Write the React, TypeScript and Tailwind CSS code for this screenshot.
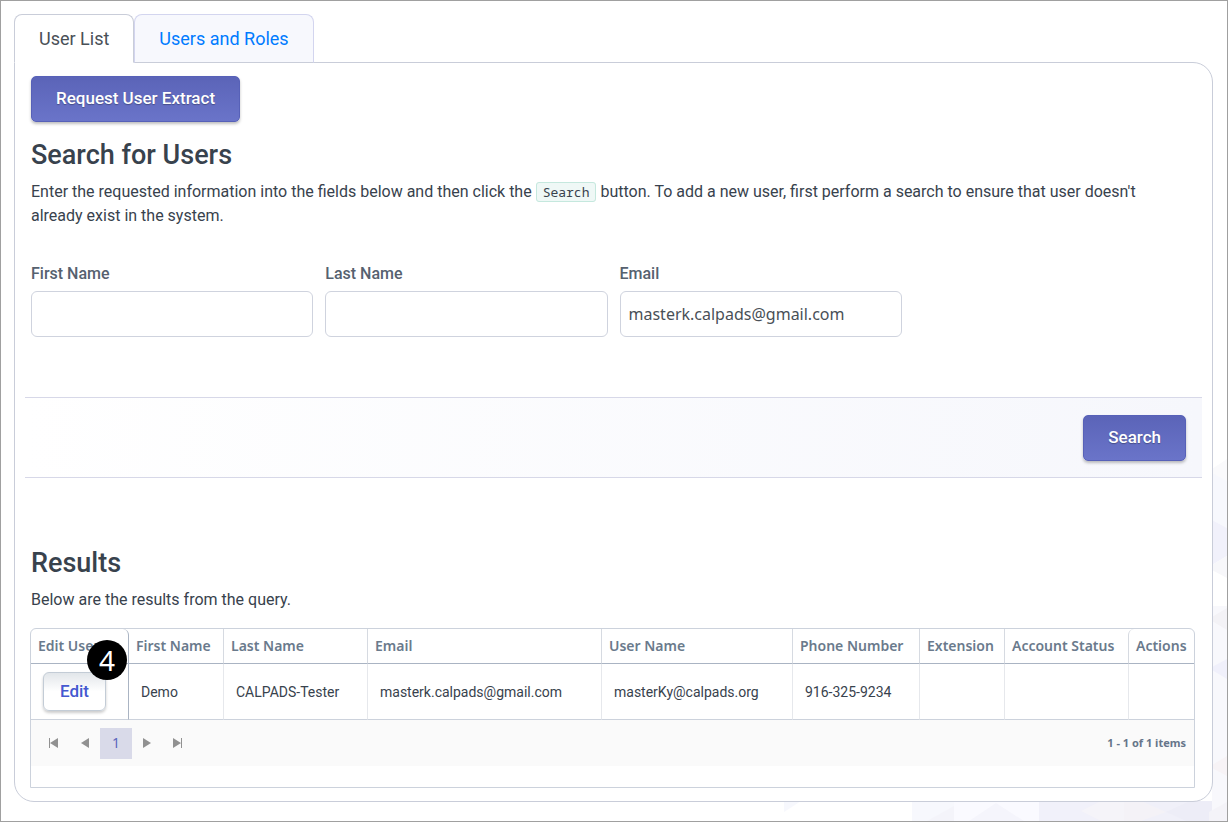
import { useState } from "react";
import { clsx } from "clsx";

const fields = [
  { id: "firstName", label: "First Name", value: "" },
  { id: "lastName", label: "Last Name", value: "" },
  { id: "email", label: "Email", value: "masterk.calpads@gmail.com" },
];

const columns = [
  { title: "Edit User", width: "w-[98px]" },
  { title: "First Name", width: "w-[94px]" },
  { title: "Last Name", width: "w-[144px]" },
  { title: "Email", width: "w-[234px]" },
  { title: "User Name", width: "w-[191px]" },
  { title: "Phone Number", width: "w-[127px]" },
  { title: "Extension", width: "w-[85px]" },
  { title: "Account Status", width: "w-[124px]" },
  { title: "Actions", width: "w-[66px]" },
];

const rows = [
  [
    "Demo",
    "CALPADS-Tester",
    "masterk.calpads@gmail.com",
    "masterKy@calpads.org",
    "916-325-9234",
    "",
    "",
    "",
  ],
];

const App = () => {
  const [tab, setTab] = useState("list");

  return (
    <div className="relative isolate min-h-screen border border-[#a0a0a0] bg-white pt-[13px] pr-[14px] pb-[19px] pl-[13px] font-['Roboto',sans-serif] text-[#38424d]">
      <Backdrop />

      <div role="tablist" className="relative -mb-px flex">
        <Tab active={tab === "list"} onClick={() => setTab("list")}>
          User List
        </Tab>
        <Tab active={tab === "roles"} onClick={() => setTab("roles")}>
          Users and Roles
        </Tab>
      </div>

      <main className="rounded-[20px] rounded-tl-none border border-[#c9cdd9] bg-white px-4 pt-[13px] pb-[13px]">
        <PrimaryButton>Request User Extract</PrimaryButton>

        <h2 className="mt-4 text-[27px] leading-[34px] font-medium">
          Search for Users
        </h2>
        <p className="mt-2 pr-8 leading-6">
          Enter the requested information into the fields below and then click
          the{" "}
          <code className="rounded-[3px] border border-[#c5e8de] bg-[#eff8f6] px-1.5 font-['Noto_Sans_Mono','DejaVu_Sans_Mono',monospace] text-[13px]">
            Search
          </code>{" "}
          button. To add a new user, first perform a search to ensure that user
          doesn't already exist in the system.
        </p>

        <form onSubmit={(e) => e.preventDefault()}>
          <div className="mt-[33px] grid grid-cols-4 gap-3">
            {fields.map((field) => (
              <div key={field.id}>
                <label
                  htmlFor={field.id}
                  className="block leading-[26px] font-medium text-[#56616f]"
                >
                  {field.label}
                </label>
                <input
                  id={field.id}
                  type="text"
                  defaultValue={field.value}
                  className="mt-1 h-[46px] w-full rounded-md border border-[#cfd3de] bg-white px-2 font-['Noto_Sans',sans-serif] text-base text-[#495057] outline-none focus:border-[#5c66bd]"
                />
              </div>
            ))}
          </div>

          <div className="-mx-1.5 mt-[60px] flex h-[81px] items-center justify-end border-y border-[#d7d8e8] bg-linear-to-r from-white to-[#f6f7fc] px-4">
            <PrimaryButton type="submit">Search</PrimaryButton>
          </div>
        </form>

        <h2 className="mt-[68px] text-[27px] leading-[34px] font-medium">
          Results
        </h2>
        <p className="mt-2 leading-6">Below are the results from the query.</p>

        <div className="mr-px -ml-px mt-4 rounded-t-md border border-[#ccd2dc] pb-[21px]">
          <table className="w-full table-fixed border-separate border-spacing-0 text-left text-sm">
            <thead>
              <tr className="h-[35px]">
                {columns.map((column, i) => (
                  <th
                    key={column.title}
                    scope="col"
                    className={clsx(
                      "border-b border-b-[#aab4c3] px-[7px] font-['Noto_Sans',sans-serif] font-semibold whitespace-nowrap text-[#6a7a8c]",
                      column.width,
                      i === 0 && "relative rounded-tr-md border-r border-r-[#aab4c3]",
                      i > 1 && "border-l border-l-[#d6dae1]",
                      i === columns.length - 1 && "rounded-t-md"
                    )}
                  >
                    {column.title}
                    {i === 0 && <StepMarker step={4} />}
                  </th>
                ))}
              </tr>
            </thead>
            <tbody>
              {rows.map((row) => (
                <tr key={row[2]} className="h-14">
                  <td className="border-r border-b border-[#ccd2dc] border-r-[#aab4c3] pl-3">
                    <button className="h-[39px] rounded-md border border-[#c3ccd6] bg-linear-to-b from-[#e2e6ea] via-white via-50% to-white px-4 text-[17px] font-medium text-[#4458d0] shadow-[0_2px_3px_rgba(0,0,0,0.2)]">
                      Edit
                    </button>
                  </td>
                  {row.map((value, i) => (
                    <td
                      key={i}
                      className={clsx(
                        "border-b border-b-[#ccd2dc] px-3",
                        i > 0 && "border-l border-l-[#e6e8ec]"
                      )}
                    >
                      {value}
                    </td>
                  ))}
                </tr>
              ))}
            </tbody>
          </table>
          <Pager />
        </div>
      </main>
    </div>
  );
};

const Tab = ({
  active,
  onClick,
  children,
}: {
  active: boolean;
  onClick: () => void;
  children: React.ReactNode;
}) => {
  return (
    <button
      role="tab"
      aria-selected={active}
      onClick={onClick}
      className={clsx(
        "h-[49px] rounded-t-lg border px-6 text-lg",
        active
          ? "border-[#c9cdd9] border-b-white bg-white text-[#495057]"
          : "border-[#d3d5ef] border-b-[#c9cdd9] bg-[#f7f8fd] text-[#007bff]"
      )}
    >
      {children}
    </button>
  );
};

const PrimaryButton = ({
  type = "button",
  children,
}: {
  type?: "button" | "submit";
  children: React.ReactNode;
}) => {
  return (
    <button
      type={type}
      className="block h-[46px] rounded-[5px] border border-[#5761b8] bg-linear-to-b from-[#5b64b8] to-[#6a74c9] px-6 text-[17px] font-medium text-white shadow-[0_2px_3px_rgba(0,0,0,0.25)] text-shadow-[0_1px_1px_rgba(0,0,0,0.3)]"
    >
      {children}
    </button>
  );
};

const StepMarker = ({ step }: { step: number }) => {
  return (
    <span className="absolute top-[11px] right-px flex size-10 items-center justify-center rounded-full bg-black text-[28px] font-normal text-white">
      {step}
    </span>
  );
};

const Pager = () => {
  return (
    <nav
      aria-label="Results pages"
      className="flex h-[46px] items-center bg-[#fafafa] pr-2 pl-[7px] font-['Noto_Sans',sans-serif] text-[#919191]"
    >
      <PagerButton label="First page" path="M3 3h1v10H3zM12 3v10L4 8z" />
      <PagerButton label="Previous page" path="M12 3v10L4 8z" />
      <button
        aria-current="page"
        className="h-[31px] w-8 bg-[#d9dae9] text-sm text-[#5c66bd]"
      >
        1
      </button>
      <PagerButton label="Next page" path="M3 3v10l8-5z" />
      <PagerButton label="Last page" path="M2 3v10l8-5zM10 3h1v10h-1z" />
      <span className="ml-auto text-[11px] font-bold text-[#66758a]">
        1 - 1 of 1 items
      </span>
    </nav>
  );
};

const PagerButton = ({ label, path }: { label: string; path: string }) => {
  return (
    <button
      aria-label={label}
      className="flex h-[31px] w-[31px] items-center justify-center"
    >
      <svg viewBox="0 0 16 16" className="size-4" fill="currentColor">
        <path d={path} />
      </svg>
    </button>
  );
};

// Faint triangle mosaic fading in towards the bottom right corner
const Backdrop = () => {
  return (
    <svg
      viewBox="0 0 450 370"
      className="absolute right-0 bottom-0 -z-10 h-[370px] w-[450px]"
      aria-hidden="true"
    >
      <path fill="#fafafc" d="M435 18l15-10v22l-15-7z" />
      <path fill="#f7f8fd" d="M435 22l15 8v47l-15-8z" />
      <path fill="#f1f1fb" d="M435 69l15 8v28l-15 9z" />
      <path fill="#f7f7fa" d="M435 114l15-9v22l-15-8z" />
      <path fill="#f8f8fc" d="M435 155h15v215h-15z" />
      <path fill="#f3f2f6" d="M435 166l15-9v22l-15-9z" />
      <path fill="#f0f0fb" d="M435 216l15-8v20l-15-9z" />
      <path fill="#f7f3f6" d="M435 314l15-9v20l-15-8z" />
      <path fill="#f7f8fd" d="M7 350h17L7 361zM135 350h42v20h-42z" />
      <path fill="#f4f4fa" d="M150 370l27-15v15z" />
      <path fill="#fafaff" d="M177 350h42v20h-42zM219 350h43v20h-43z" />
      <path fill="#f5f5fc" d="M192 370l27-18 28 18z" />
      <path fill="#f1f1fa" d="M262 350h85v20h-85z" />
      <path fill="#f5f4f9" d="M304 360l20-10h23v20h-23z" />
      <path fill="#f0f0f9" d="M347 350h88v20h-88z" />
      <path fill="#f4f2f7" d="M347 350h17l25 11-25 9h-17z" />
      <path fill="#ededf7" d="M389 361l24-11h22v20h-26z" />
      <path fill="#f4f3f8" d="M432 361l18-10v19h-18z" />
    </svg>
  );
};

export default App;
